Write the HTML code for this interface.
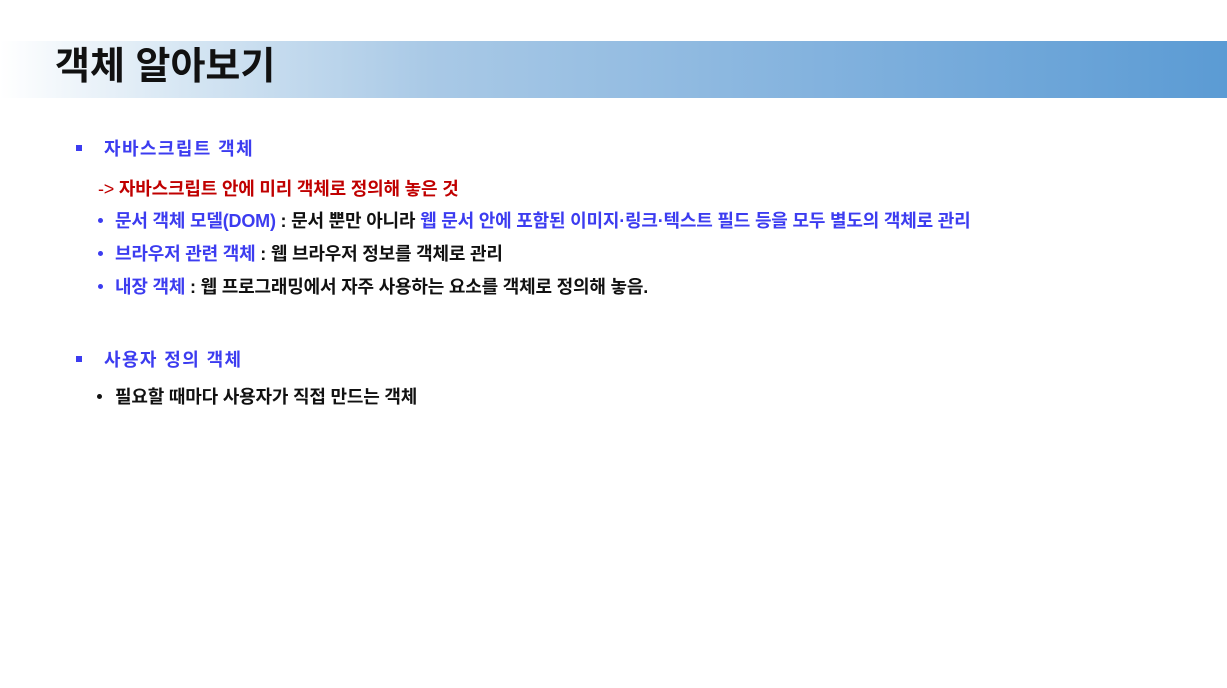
<!DOCTYPE html>
<html><head><meta charset="utf-8"><style>
body{margin:0;width:1227px;height:688px;background:#fff;position:relative;overflow:hidden;font-family:"Liberation Sans","Noto Sans CJK KR",sans-serif;}
.band{position:absolute;left:0;top:41px;width:1227px;height:57px;background:linear-gradient(90deg,#ffffff 0%,#d6e6f3 15%,#a9c9e6 35%,#7fb0dd 70%,#5b9bd4 100%);}
.title{position:absolute;left:55px;top:41px;font-size:38px;font-weight:bold;color:#111;line-height:52px;letter-spacing:0px;}
.l{position:absolute;white-space:nowrap;font-size:18px;font-weight:bold;line-height:24px;letter-spacing:-0.2px;color:#111;}
.h{letter-spacing:1.4px}
.b{color:#3c3cf0}.r{color:#c00000}
.sq{position:absolute;width:6px;height:6px;background:#3c3cf0;}
.dot{position:absolute;width:5px;height:5px;border-radius:50%;}
</style></head><body>
<div class="band"></div>
<div class="title">객체 알아보기</div>
<div class="sq" style="left:76px;top:145px"></div>
<div class="l b h" style="left:104px;top:137px">자바스크립트 객체</div>
<div class="l r" style="left:98px;top:177px"><span style="font-weight:normal">-&gt;</span> 자바스크립트 안에 미리 객체로 정의해 놓은 것</div>
<div class="dot" style="left:98px;top:218px;background:#3c3cf0"></div>
<div class="l" style="left:115px;top:209px"><span class="b">문서 객체 모델(DOM)</span> : 문서 뿐만 아니라 <span class="b">웹 문서 안에 포함된 이미지·링크·텍스트 필드 등을 모두 별도의 객체로 관리</span></div>
<div class="dot" style="left:98px;top:251px;background:#3c3cf0"></div>
<div class="l" style="left:115px;top:242px"><span class="b">브라우저 관련 객체</span> : 웹 브라우저 정보를 객체로 관리</div>
<div class="dot" style="left:98px;top:284px;background:#3c3cf0"></div>
<div class="l" style="left:115px;top:275px"><span class="b">내장 객체</span> : 웹 프로그래밍에서 자주 사용하는 요소를 객체로 정의해 놓음.</div>
<div class="sq" style="left:76px;top:356px"></div>
<div class="l b h" style="left:104px;top:348px">사용자 정의 객체</div>
<div class="dot" style="left:97px;top:394px;background:#111"></div>
<div class="l" style="left:115px;top:385px">필요할 때마다 사용자가 직접 만드는 객체</div>
</body></html>
